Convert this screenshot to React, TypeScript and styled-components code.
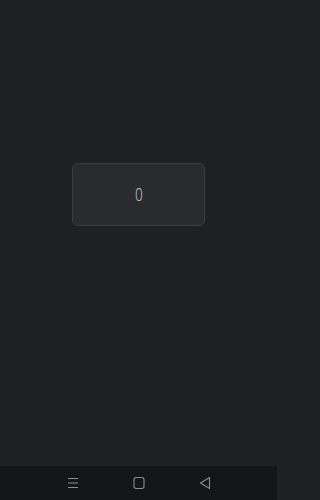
import React from "react";
import styled, { createGlobalStyle } from "styled-components";

const Global = createGlobalStyle`
  html, body { margin: 0; padding: 0; background: #1f2024; }
  #root { height: 500px; }
  * { box-sizing: border-box; }
`;

const Screen = styled.div`
  width: 277px;
  height: 500px;
  display: flex;
  flex-direction: column;
  background: #1f2024;
  font-family: Roboto, "Liberation Sans", sans-serif;
`;

const Main = styled.main`
  flex: 1;
  display: flex;
  justify-content: center;
  align-items: flex-start;
  padding-top: 163px;
`;

const Card = styled.div`
  width: 133px;
  height: 63px;
  border: 1px solid #3c3d42;
  border-radius: 6px;
  background: #2a2b2f;
  display: flex;
  align-items: center;
  justify-content: center;
`;

const Count = styled.span`
  color: #bdbec2;
  font-size: 18px;
  font-weight: 300;
  line-height: 1;
  transform: scaleX(0.78);
`;

const NavBar = styled.nav`
  height: 34px;
  background: #141518;
  display: grid;
  grid-template-columns: repeat(3, 66px);
  justify-content: center;
  align-items: center;
  justify-items: center;
`;

const NavIcon = styled.svg`
  width: 12px;
  height: 14px;
  display: block;
  color: #8c8d91;
`;

export default function App() {
  return (
    <>
      <Global />
      <Screen>
        <Main>
          <Card>
            <Count>0</Count>
          </Card>
        </Main>
        <NavBar>
          <NavIcon viewBox="0 0 12 14" fill="none" stroke="currentColor" strokeWidth="1.2">
            <path d="M1 2.5h10M1 7h10M1 11.5h10" />
          </NavIcon>
          <NavIcon viewBox="0 0 12 14" fill="none" stroke="currentColor" strokeWidth="1.1">
            <rect x="1" y="1.5" width="10" height="11" rx="2.2" />
          </NavIcon>
          <NavIcon viewBox="0 0 12 14" fill="none" stroke="currentColor" strokeWidth="1.1" strokeLinejoin="round">
            <path d="M10.5 1.5 L1.5 7 L10.5 12.5 Z" />
          </NavIcon>
        </NavBar>
      </Screen>
    </>
  );
}
